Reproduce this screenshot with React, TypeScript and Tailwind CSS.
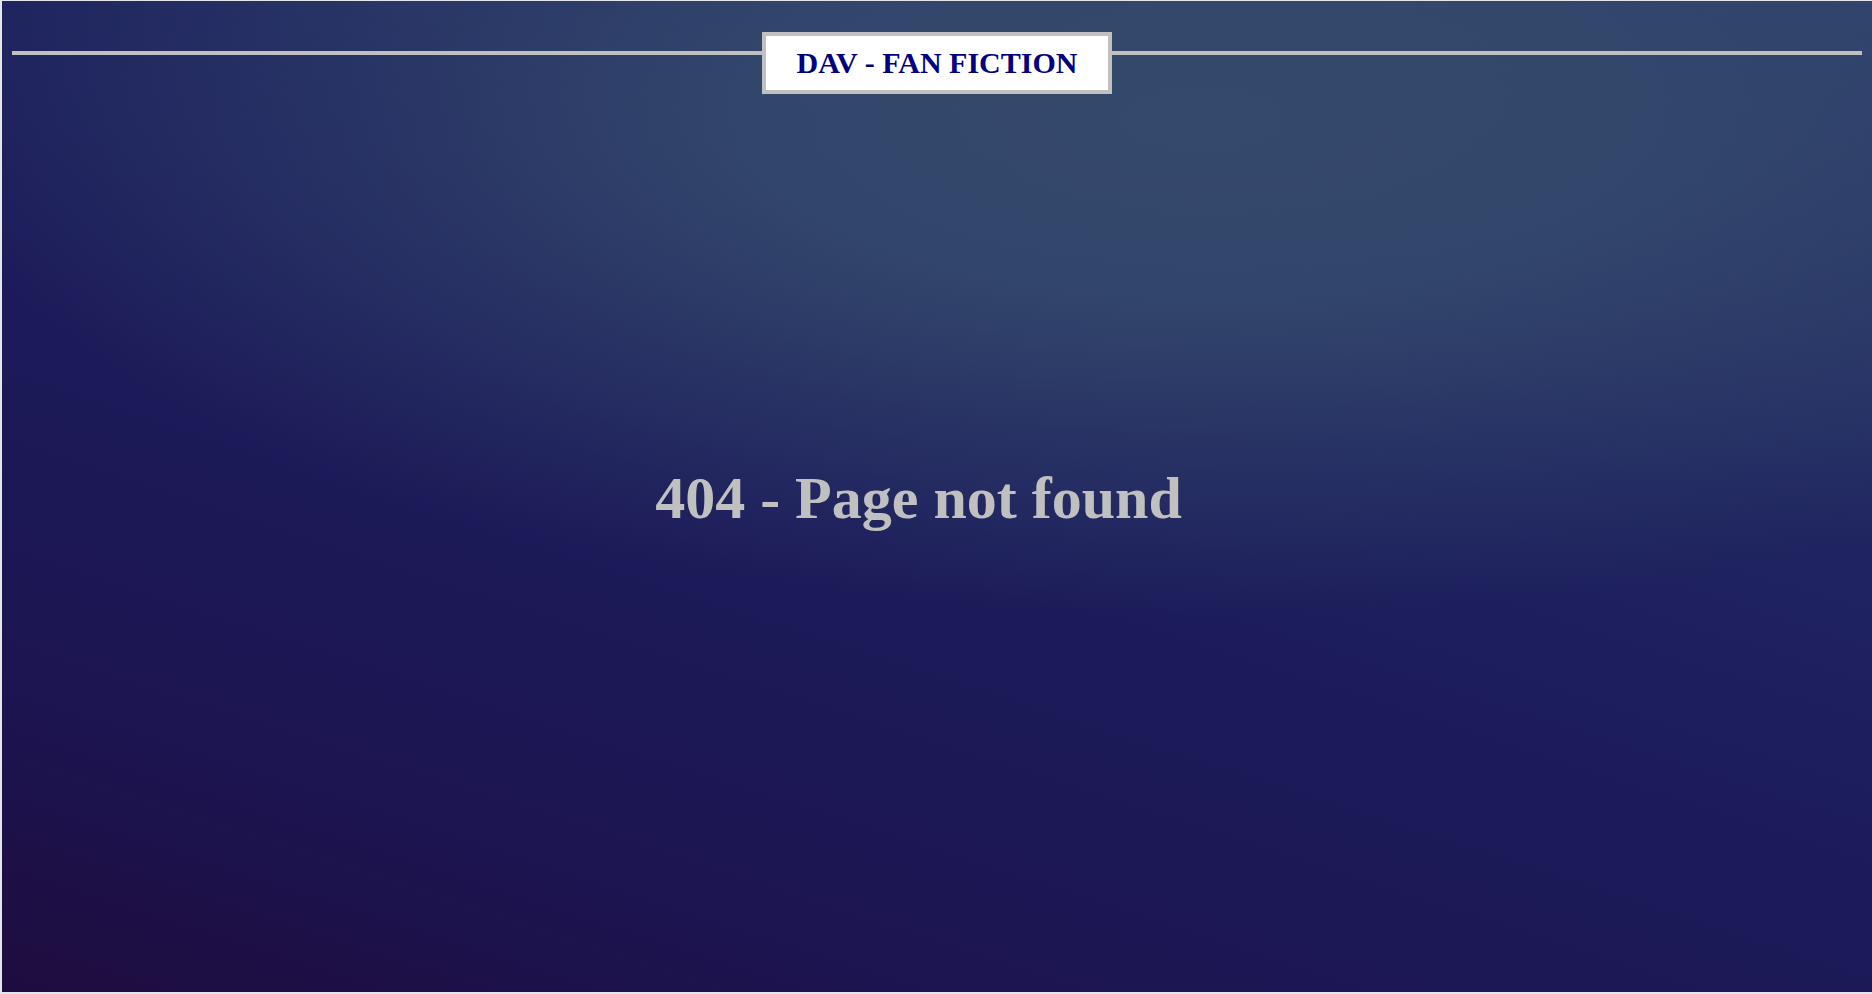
import React from "react";

export default function App() {
  return (
    <div
      className="h-[994px] w-full overflow-hidden border-t border-l-2 border-b-2 border-[#e4e6ee] bg-[radial-gradient(ellipse_68%_50%_at_64%_12%,#35496c_0%,rgba(52,73,108,0.9)_35%,rgba(52,73,108,0.45)_65%,rgba(52,73,108,0)_100%),linear-gradient(18deg,#1e0c3e_0%,#1c1552_20%,#1c1b5a_45%,#1f2460_65%,#2c3d6c_100%)]"
      style={{ fontFamily: '"Liberation Serif", "Times New Roman", serif' }}
    >
      <div className="flex items-start pl-[10px] pr-[10px] pt-[31px]">
        <div className="mt-[19px] h-[4px] flex-1 bg-[#c0c0c0]" />
        <div className="flex h-[62px] w-[350px] items-center justify-center border-4 border-[#c0c0c0] bg-white">
          <span className="text-[30px] font-bold leading-none text-[#000080]">DAV - FAN FICTION</span>
        </div>
        <div className="mt-[19px] h-[4px] flex-1 bg-[#c0c0c0]" />
      </div>
      <div className="mt-[369px] flex justify-center pr-[37px]">
        <h1 className="text-[60px] font-bold leading-[70px] text-[#c0c0c0]">404 - Page not found</h1>
      </div>
    </div>
  );
}
